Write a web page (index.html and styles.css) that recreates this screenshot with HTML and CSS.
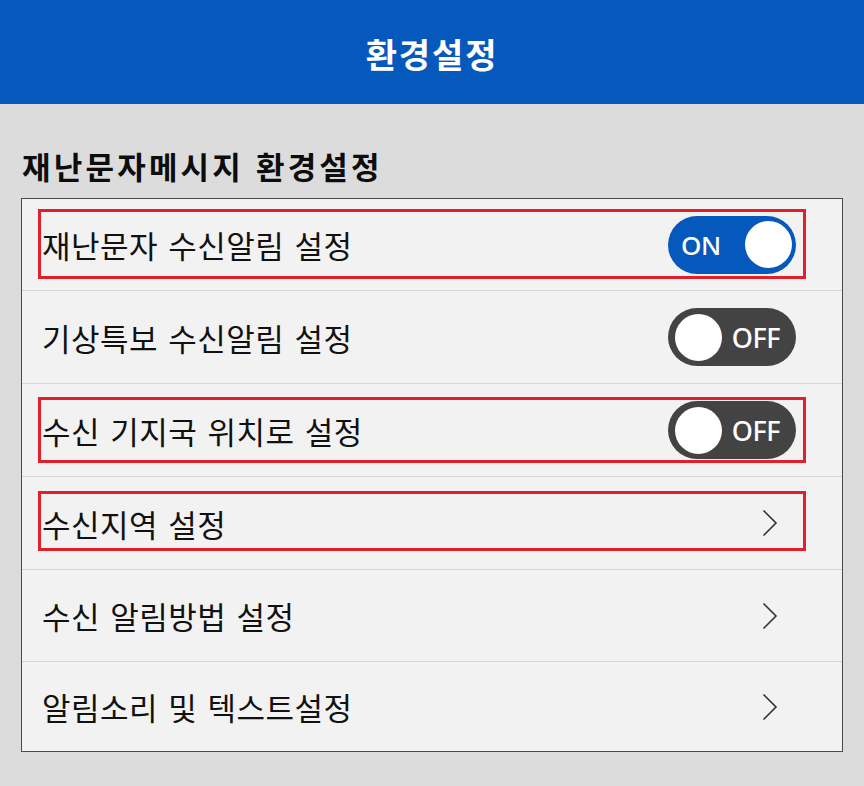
FILE: index.html
```html
<!DOCTYPE html>
<html lang="ko">
<head>
<meta charset="utf-8">
<title>환경설정</title>
<link rel="stylesheet" href="styles.css">
</head>
<body>
<header class="appbar"><h1 class="appbar-title">환경설정</h1></header>
<main class="content">
  <h2 class="section-title">재난문자메시지 환경설정</h2>
  <ul class="card">
    <li class="row">
      <span class="label">재난문자 수신알림 설정</span>
      <span class="toggle toggle-on"><span class="toggle-text">ON</span><span class="knob"></span></span>
      <span class="mark mark-1"></span>
    </li>
    <li class="row">
      <span class="label">기상특보 수신알림 설정</span>
      <span class="toggle toggle-off"><span class="knob"></span><span class="toggle-text">OFF</span></span>
    </li>
    <li class="row">
      <span class="label">수신 기지국 위치로 설정</span>
      <span class="toggle toggle-off"><span class="knob"></span><span class="toggle-text">OFF</span></span>
      <span class="mark mark-3"></span>
    </li>
    <li class="row">
      <span class="label">수신지역 설정</span>
      <svg class="chevron" width="16" height="28" viewBox="0 0 16 28"><path d="M1.5 1.5 L14 14 L1.5 26.5" fill="none" stroke="#333" stroke-width="1.6"/></svg>
      <span class="mark mark-4"></span>
    </li>
    <li class="row row-5">
      <span class="label">수신 알림방법 설정</span>
      <svg class="chevron" width="16" height="28" viewBox="0 0 16 28"><path d="M1.5 1.5 L14 14 L1.5 26.5" fill="none" stroke="#333" stroke-width="1.6"/></svg>
    </li>
    <li class="row row-6">
      <span class="label">알림소리 및 텍스트설정</span>
      <svg class="chevron" width="16" height="28" viewBox="0 0 16 28"><path d="M1.5 1.5 L14 14 L1.5 26.5" fill="none" stroke="#333" stroke-width="1.6"/></svg>
    </li>
  </ul>
</main>
</body>
</html>
```
FILE: styles.css
```css
* { box-sizing: border-box; }
html, body { margin: 0; padding: 0; }
body {
  background: #dcdcdc;
  font-family: "Noto Sans CJK KR", "Noto Sans", sans-serif;
  color: #111;
  width: 864px;
  height: 786px;
  overflow: hidden;
}
.appbar {
  height: 104px;
  background: #0558bc;
  display: flex;
  align-items: center;
  justify-content: center;
}
.appbar-title {
  margin: 0;
  color: #fff;
  font-size: 34px;
  font-weight: 700;
  letter-spacing: 1.9px;
  line-height: 1;
  padding-top: 4px;
}
.content {
  padding: 0 21px;
}
.section-title {
  margin: 0;
  height: 94px;
  display: flex;
  align-items: center;
  padding-top: 28px;
  padding-left: 1px;
  font-size: 31px;
  font-weight: 700;
  letter-spacing: 3.2px;
  color: #0d0d0d;
}
.card {
  list-style: none;
  margin: 0;
  padding: 0;
  border: 1px solid #4a4a4a;
  background: #f2f2f2;
}
.row {
  position: relative;
  height: 93px;
  display: flex;
  align-items: center;
  justify-content: space-between;
  padding: 0 46px 0 20px;
  border-top: 1px solid #d6d6d6;
}
.row:first-child { border-top: none; height: 91px; }
.row-5 { height: 92px; }
.row-6 { height: 90px; }
.label {
  font-size: 31px;
  letter-spacing: 0.5px;
  word-spacing: 1px;
  color: #111;
  line-height: 1;
}
.toggle {
  width: 128px;
  height: 58px;
  border-radius: 29px;
  display: flex;
  align-items: center;
  padding: 0 5px;
  color: #fff;
  font-family: "Noto Sans", sans-serif;
  font-weight: 500;
}
.toggle-on { background: #0558bc; justify-content: space-between; padding-left: 13px; padding-right: 4px; }
.toggle-off { background: #434343; justify-content: space-between; padding-left: 7px; padding-right: 16px; }
.toggle-text { font-size: 26px; line-height: 1; letter-spacing: -0.5px; }
.toggle-off .toggle-text { font-size: 27px; }
.knob {
  width: 47px;
  height: 47px;
  border-radius: 50%;
  background: #fff;
}
.chevron { margin-right: 18px; }
.mark {
  position: absolute;
  border: 3.5px solid #e0202a;
  left: 16px;
  right: 36px;
}
.mark-1 { top: 10px; bottom: 11px; }
.mark-3 { top: 13px; bottom: 13px; }
.mark-4 { top: 14px; bottom: 18px; }
```
